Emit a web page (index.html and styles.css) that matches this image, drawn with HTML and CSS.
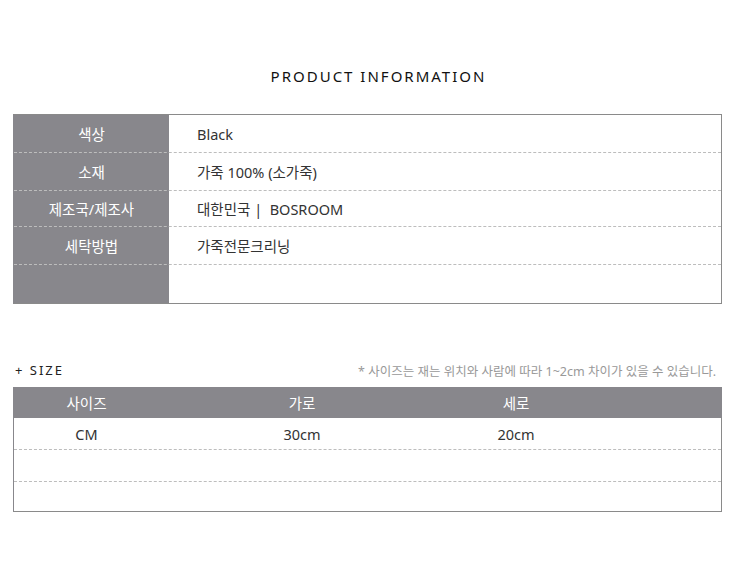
FILE: index.html
```html
<!DOCTYPE html>
<html lang="ko">
<head>
<meta charset="utf-8">
<link rel="stylesheet" href="styles.css">
</head>
<body>
<div class="page">
  <h1 class="title">PRODUCT INFORMATION</h1>
  <div class="info">
    <div class="row r1"><div class="label">색상</div><div class="value">Black</div></div>
    <div class="row r2"><div class="label">소재</div><div class="value">가죽 100% (소가죽)</div></div>
    <div class="row r3"><div class="label">제조국/제조사</div><div class="value">대한민국 |&nbsp; BOSROOM</div></div>
    <div class="row r4"><div class="label">세탁방법</div><div class="value">가죽전문크리닝</div></div>
    <div class="row r5 last"><div class="label"></div><div class="value"></div></div>
  </div>
  <div class="size-head">
    <span class="size-title">+ SIZE</span>
    <span class="size-note">* 사이즈는 재는 위치와 사람에 따라 1~2cm 차이가 있을 수 있습니다.</span>
  </div>
  <div class="size">
    <div class="srow shead"><div>사이즈</div><div>가로</div><div>세로</div><div></div></div>
    <div class="srow sbody"><div>CM</div><div>30cm</div><div>20cm</div><div></div></div>
    <div class="srow sbody"><div></div><div></div><div></div><div></div></div>
    <div class="srow sbody slast"><div></div><div></div><div></div><div></div></div>
  </div>
</div>
</body>
</html>
```
FILE: styles.css
```css
html, body { margin: 0; padding: 0; background: #fff; }
body {
  font-family: "Noto Sans", "Noto Sans CJK KR", sans-serif;
  color: #333;
}
.page {
  width: 709px;
  margin-left: 13px;
  padding-top: 66px;
}
.title {
  margin: 0;
  font-size: 15px;
  line-height: 20px;
  font-weight: 400;
  letter-spacing: 2px;
  text-align: center;
  color: #111;
  padding-left: 22px;
}
.info {
  margin-top: 28px;
  border: 1px solid #8a8a8a;
  border-left-color: #88878c;
  background: linear-gradient(to right, #88878c 0 155px, #fff 155px);
}
.row {
  display: grid;
  grid-template-columns: 155px 1fr;
  height: 37px;
  border-bottom: 1px dashed #bdbdbd;
  font-size: 14.5px;
}
.row.r3 { height: 35px; }
.row.last { height: 38px; border-bottom: none; }
.label {
  display: flex;
  align-items: center;
  justify-content: center;
  color: #fff;
}
.value {
  display: flex;
  align-items: center;
  padding-left: 28px;
  color: #333;
}
.size-head {
  margin-top: 57px;
  display: flex;
  justify-content: space-between;
  align-items: center;
  height: 18px;
}
.size-title {
  font-size: 13px;
  letter-spacing: 2px;
  color: #222;
  padding-left: 2px;
}
.size-note {
  font-size: 12.5px;
  color: #999;
  padding-right: 6px;
}
.size {
  margin-top: 8px;
  border: 1px solid #8a8a8a;
  border-top: none;
  border-left-color: #88878c;
}
.srow {
  display: grid;
  grid-template-columns: 145px 286px 142px 1fr;
  font-size: 14.5px;
}
.srow > div {
  display: flex;
  align-items: center;
  justify-content: center;
}
.shead {
  height: 31px;
  background: #88878c;
  color: #fff;
  margin-right: -1px;
}
.sbody {
  height: 31px;
  border-bottom: 1px dashed #bdbdbd;
  color: #333;
}
.sbody.slast { height: 29px; border-bottom: none; }
```
